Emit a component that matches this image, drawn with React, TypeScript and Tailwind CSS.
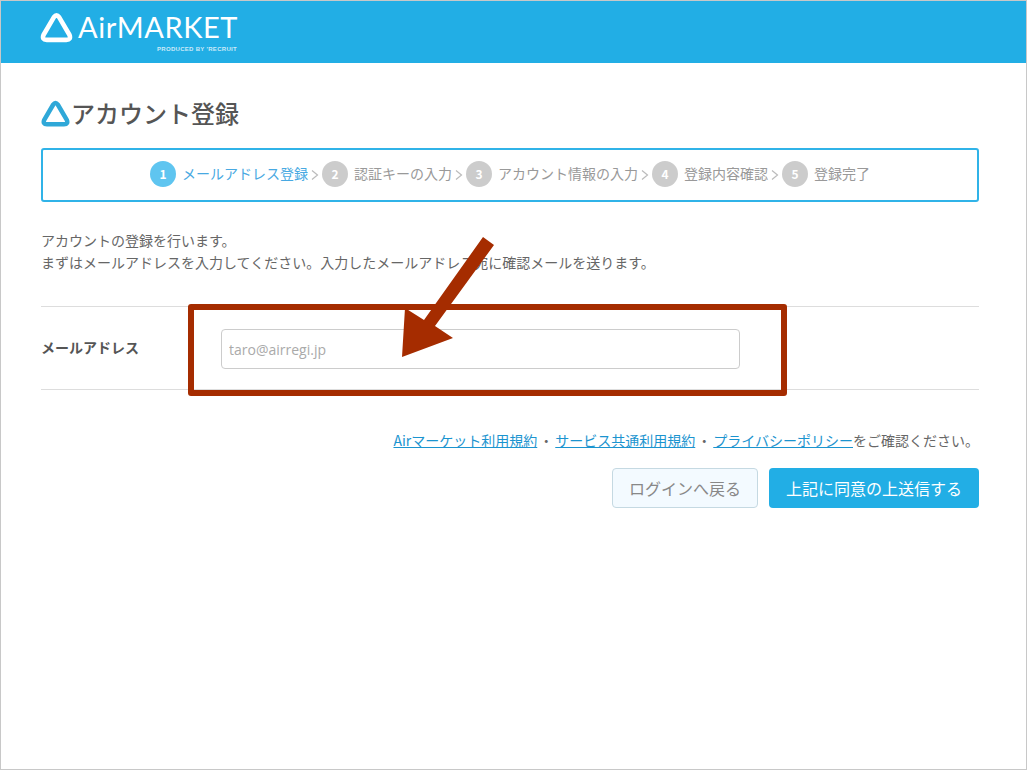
import React from "react";

const JP = "font-['Noto_Sans_CJK_JP','Liberation_Sans',sans-serif]";

function Tri({ className, stroke, w }: { className: string; stroke: string; w: number }) {
  return (
    <svg viewBox="0 0 32 30" className={className} fill="none">
      <path d="M13.5 5 Q16 1.5 18.5 5 L28.5 22 Q30.5 27 25.5 27 H6.5 Q1.5 27 3.5 22 Z" stroke={stroke} strokeWidth={w} strokeLinejoin="round" />
    </svg>
  );
}

const steps = ["メールアドレス登録", "認証キーの入力", "アカウント情報の入力", "登録内容確認", "登録完了"];

function Chevron() {
  return (
    <svg viewBox="0 0 8 14" className="w-[8px] h-[14px] mx-[3px] mt-[1px]" fill="none">
      <path d="M1 2.5 L6.5 7 L1 11.5" stroke="#bbbbbb" strokeWidth="1.2" />
    </svg>
  );
}

export default function App() {
  return (
    <div className={`relative w-[1027px] h-[770px] bg-white border border-[#c8c8c8] overflow-hidden text-[#666] ${JP}`}>
      <header className="h-[62px] bg-[#22aee5] pl-[39px] flex items-start">
        <Tri className="w-[33px] h-[31px] mt-[11px]" stroke="#fff" w={4.5} />
        <div className="ml-[5px] relative h-[62px] w-[170px]">
          <div className="font-['Lato',sans-serif] text-[29px] leading-none text-white tracking-[0.6px] pt-[11px] whitespace-nowrap">AirMARKET</div>
          <div className="absolute left-[79px] top-[44px] font-['Liberation_Sans',sans-serif] font-bold text-[6px] leading-[8px] tracking-[0.3px] text-[#cdeaf8] whitespace-nowrap">PRODUCED BY ′RECRUIT</div>
        </div>
      </header>

      <main className="pl-[40px] pr-[47px]">
        <div className="flex items-center mt-[34px] h-[32px]">
          <Tri className="w-[29px] h-[27px] mr-[1px]" stroke="#2fa8d8" w={5} />
          <h1 className="text-[24px] leading-[32px] font-medium text-[#555]">アカウント登録</h1>
        </div>

        <div className="mt-[19px] h-[54px] pb-[2px] border-2 border-[#30b3e8] rounded-[3px] flex items-center justify-center">
          {steps.map((s, i) => (
            <React.Fragment key={s}>
              {i > 0 && <Chevron />}
              <span className={`w-[26px] h-[26px] rounded-full flex items-center justify-center text-white text-[12px] font-bold ${i === 0 ? "bg-[#5fc5f0]" : "bg-[#cccccc]"}`}>{i + 1}</span>
              <span className={`ml-[6px] mb-[2px] text-[14px] leading-[20px] whitespace-nowrap ${i === 0 ? "text-[#48a9e2]" : "text-[#999]"}`}>{s}</span>
            </React.Fragment>
          ))}
        </div>

        <p className="mt-[27px] text-[14px] leading-[22px] text-[#666]">
          アカウントの登録を行います。<br />
          まずはメールアドレスを入力してください。入力したメールアドレス宛に確認メールを送ります。
        </p>

        <div className="mt-[33px] h-[84px] border-y border-[#dddddd] flex items-center">
          <label className="w-[180px] mb-[2px] text-[14px] font-bold text-[#555]">メールアドレス</label>
          <input
            readOnly
            placeholder="taro@airregi.jp"
            className="w-[519px] h-[40px] mt-[2px] border border-[#cccccc] rounded-[4px] px-[7px] text-[14px] font-['Open_Sans',sans-serif] placeholder:text-[#aaaaaa]"
          />
        </div>

        <p className="mt-[40px] text-right text-[14px] leading-[20px] text-[#666]">
          <a className="text-[#1b94cf] underline">Airマーケット利用規約</a>
          <span className="mx-[2px]">・</span>
          <a className="text-[#1b94cf] underline">サービス共通利用規約</a>
          <span className="mx-[2px]">・</span>
          <a className="text-[#1b94cf] underline">プライバシーポリシー</a>をご確認ください。
        </p>

        <div className="mt-[18px] flex justify-end gap-[11px]">
          <button className="w-[146px] h-[40px] rounded-[4px] border border-[#c5d9e2] bg-[#f3faff] text-[16px] text-[#888]">ログインへ戻る</button>
          <button className="w-[210px] h-[40px] rounded-[4px] bg-[#22aee5] text-[16px] text-white">上記に同意の上送信する</button>
        </div>
      </main>

      <div className="absolute left-[187px] top-[303px] w-[599px] h-[92px] border-[6px] border-[#a52c00] rounded-[3px]" />
      <svg className="absolute left-0 top-0 w-[1027px] h-[770px] pointer-events-none" viewBox="0 0 1027 770">
        <polygon points="482,236 493,244 434,325 452,337 401,356 404,307 423,319" fill="#a52c00" />
      </svg>
    </div>
  );
}
